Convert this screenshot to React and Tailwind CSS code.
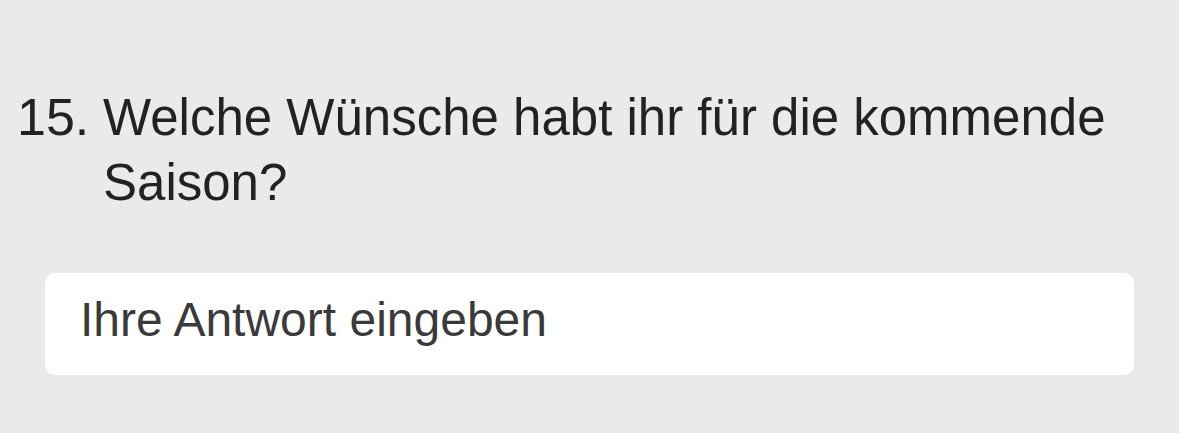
const App = () => {
    return (
        <div
            className="w-[1179px] h-[433px] bg-[#eaeaea] overflow-hidden"
            style={{ fontFamily: '"Liberation Sans", Arial, sans-serif' }}
        >
            <div className="pt-[85px] pl-[17px] pr-[40px]">
                {/* Question */}
                <div className="flex text-[51px] leading-[65px] text-[#222222]">
                    <span className="w-[86px] shrink-0 text-[52px]">15.</span>
                    <p>Welche Wünsche habt ihr für die kommende Saison?</p>
                </div>

                {/* Answer field */}
                <div className="mt-[58px] ml-[28px] mr-[5px] h-[102px] rounded-[10px] bg-white flex items-center pl-[35px] pb-[9px]">
                    <span className="text-[48px] leading-none text-[#3a3a3a]">Ihre Antwort eingeben</span>
                </div>
            </div>
        </div>
    );
};

export default App;
